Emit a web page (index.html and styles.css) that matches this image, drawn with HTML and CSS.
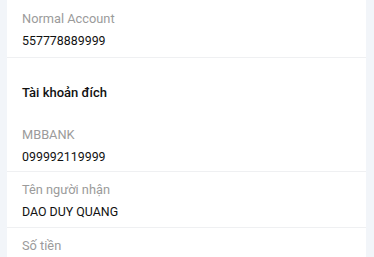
FILE: index.html
```html
<!DOCTYPE html>
<html lang="vi">
<head>
<meta charset="utf-8">
<link rel="stylesheet" href="styles.css">
</head>
<body>
<div class="card">
  <div class="row first">
    <div class="label">Normal Account</div>
    <div class="value">557778889999</div>
  </div>
  <div class="section">Tài khoản đích</div>
  <div class="row after-section">
    <div class="label">MBBANK</div>
    <div class="value">099992119999</div>
  </div>
  <div class="row">
    <div class="label">Tên người nhận</div>
    <div class="value">DAO DUY QUANG</div>
  </div>
  <div class="row last">
    <div class="label">Số tiền</div>
  </div>
</div>
</body>
</html>
```
FILE: styles.css
```css
html, body {
  margin: 0;
  padding: 0;
}
body {
  background: #f2f5f9;
  font-family: Roboto, "Noto Sans", sans-serif;
  width: 374px;
  height: 257px;
  overflow: hidden;
}
.card {
  margin: 0 8px 0 7px;
  background: #ffffff;
  height: 257px;
}
.row {
  display: flex;
  flex-direction: column;
  gap: 4px;
  padding: 9px 0 6px 15px;
  border-bottom: 1px solid #eff0f2;
}
.row.first {
  padding-top: 10px;
  padding-bottom: 7px;
}
.row.after-section {
  padding-top: 8px;
  padding-bottom: 5px;
}
.row.last {
  border-bottom: none;
}
.label {
  font-size: 12.8px;
  line-height: 18px;
  color: #9b9b9b;
}
.value {
  font-size: 12.4px;
  line-height: 18px;
  color: #111111;
}
.section {
  padding: 26px 0 16px 15px;
  font-size: 13px;
  line-height: 18px;
  font-weight: 500;
  color: #111111;
}
```
